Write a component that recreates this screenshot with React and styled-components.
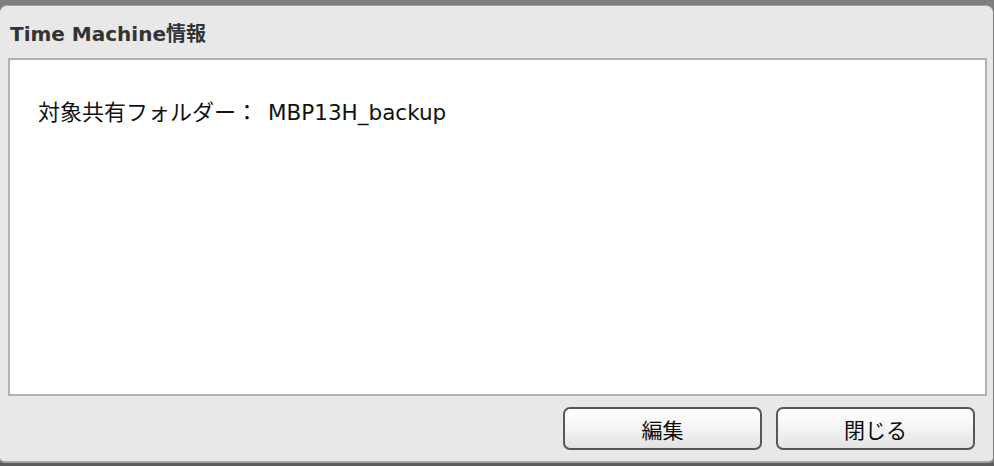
import React from 'react'
import styled, { createGlobalStyle } from 'styled-components'

const GlobalStyle = createGlobalStyle`
  html, body {
    margin: 0;
    padding: 0;
    background: #7c7c7c;
  }
  body {
    height: 466px;
    overflow: hidden;
    font-family: "DejaVu Sans", "Noto Sans CJK JP", sans-serif;
  }
`

const Backdrop = styled.div`
  height: 466px;
  padding-top: 5px;
  box-sizing: border-box;
  background: linear-gradient(#7e7e7e 0, #7e7e7e 462px, #5c5c5c 463px);
`

const Dialog = styled.div`
  display: flex;
  flex-direction: column;
  width: 993px;
  height: 458px;
  box-sizing: border-box;
  background: #e8e8e8;
  border-top: 1px solid #aaa5a5;
  border-bottom: 2px solid #a6a6a6;
  border-radius: 7px 7px 5px 5px;
`

const Title = styled.h1`
  margin: 0;
  height: 52px;
  display: flex;
  align-items: center;
  padding: 0 0 0 10px;
  font-size: 20px;
  font-weight: bold;
  color: #333333;
  font-family: "DejaVu Sans", "Noto Sans CJK JP", sans-serif;
`

const Panel = styled.div`
  margin: 0 6px 0 8px;
  height: 338px;
  box-sizing: border-box;
  background: #ffffff;
  border: 2px solid #b6b0b0;
  padding: 38px 28px;
`

const Info = styled.p`
  margin: 0;
  font-size: 22px;
  color: #111111;
  line-height: 30px;
`

const Latin = styled.span`
  font-size: 21.5px;
  margin-left: 3px;
`

const Footer = styled.div`
  display: flex;
  justify-content: flex-end;
  gap: 14px;
  padding: 11px 18px 0 0;
`

const Button = styled.button`
  width: 199px;
  height: 43px;
  box-sizing: border-box;
  border: 2px solid #575757;
  border-radius: 7px;
  background: linear-gradient(#ffffff, #f4f4f4 50%, #e2e2e2);
  font-family: "Noto Sans CJK JP", sans-serif;
  font-size: 21px;
  color: #0a0a0a;
  padding: 0;
  cursor: pointer;
`

const App = () => {
  return (
    <>
      <GlobalStyle />
      <Backdrop>
        <Dialog>
          <Title>Time Machine情報</Title>
          <Panel>
            <Info>対象共有フォルダー： <Latin>MBP13H_backup</Latin></Info>
          </Panel>
          <Footer>
            <Button>編集</Button>
            <Button>閉じる</Button>
          </Footer>
        </Dialog>
      </Backdrop>
    </>
  )
}

export default App
